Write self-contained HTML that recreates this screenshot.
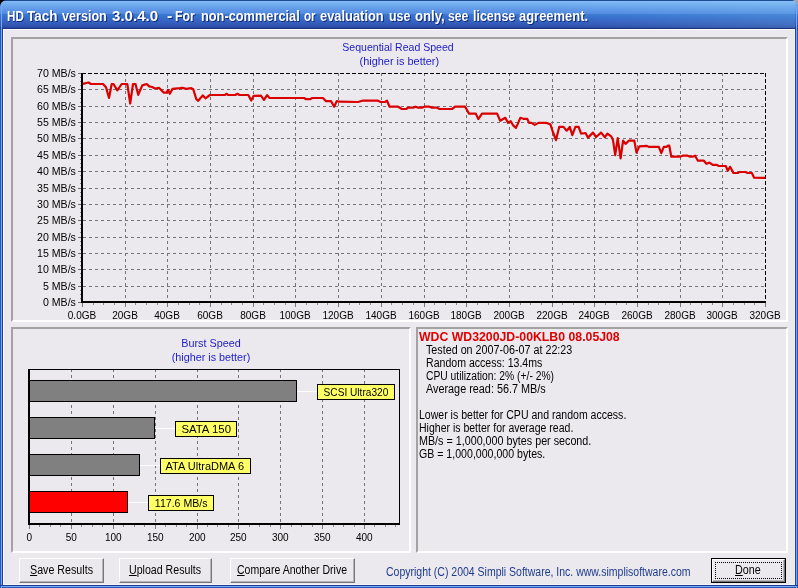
<!DOCTYPE html>
<html><head><meta charset="utf-8"><title>HD Tach</title>
<style>
html,body{margin:0;padding:0;}
body{width:798px;height:588px;overflow:hidden;position:relative;background:#ECE9EE;font-family:"Liberation Sans",sans-serif;}
.abs{position:absolute;}
#frame{left:0;top:0;width:798px;height:588px;background:#2a56c0;}
#client{left:3px;top:29px;width:792px;height:556px;background:#ECE9EE;box-shadow:inset 1px 1px 0 #fff, inset -1px -1px 0 #f6f4f8;}
#title{left:0;top:0;width:798px;height:29px;border-radius:7px 7px 0 0;
 background:linear-gradient(to bottom,#1c4c94 0px,#1c4c94 1px,#88bcfa 1px,#78b2f0 3px,#6ca6ec 6px,#5e96e6 10px,#528ae0 13.5px,#3a78d0 14.5px,#3670cc 17px,#3666c6 20px,#345ebc 23px,#3054b0 26px,#2a48a0 27.5px,#1c3480 28px,#1c3480 29px);}
#corner{left:0;top:0;width:798px;height:8px;background:#000;}
#ttext{left:8px;top:6px;color:#fff;font-weight:bold;font-size:14px;line-height:20px;white-space:pre;text-shadow:1px 1px 0 #0f2a78;}
.panel{box-sizing:border-box;border-style:solid;border-width:2px;border-color:#a2a2a2 #fff #fff #a2a2a2;background:#ECE9EE;}
.btn{box-sizing:border-box;height:25px;top:558px;border-style:solid;border-width:1px;border-color:#fff #777 #777 #fff;box-shadow:inset -1px -1px 0 #b6b4b8;background:#ECE9EE;}
.btn u{text-decoration:underline;}
.ax{font-family:"Liberation Sans",sans-serif;font-size:10.6px;fill:#000;}
.ttl{font-family:"Liberation Sans",sans-serif;font-size:10.8px;fill:#1c1cc4;}
.sx{display:inline-block;transform-origin:0 0;white-space:pre;}
.btxt{top:564px;font-size:12.5px;line-height:13px;color:#000;white-space:pre;}
#info{left:419px;top:331px;font-size:12.5px;line-height:13px;color:#000;white-space:pre;}
#info div{height:13px;}
#info .h{color:#e00000;font-weight:bold;}
#info .i{padding-left:7px;}
#copy{left:386px;top:566px;font-size:12.5px;line-height:13px;color:#1c3c8c;white-space:pre;}
#root{left:0;top:0;width:798px;height:588px;overflow:hidden;will-change:transform;}
</style></head><body><div id="root" class="abs">
<div id="corner" class="abs"></div><div class="abs" style="left:780px;top:0;width:18px;height:8px;background:#a4a4ac;"></div>
<div id="frame" class="abs" style="border-radius:8px 8px 0 0;"></div>
<div id="title" class="abs"></div><div class="abs" style="left:560px;top:1px;width:235px;height:27px;background:linear-gradient(to right,rgba(140,205,255,0),rgba(140,215,245,0.18));"></div>
<div id="ttext" class="abs"><span class="abs sx" style="left:-1.0px;top:0;transform:scaleX(0.8308)">HD</span> <span class="abs sx" style="left:19.1px;top:0;transform:scaleX(0.9640)">Tach</span> <span class="abs sx" style="left:54.2px;top:0;transform:scaleX(0.8996)">version</span> <span class="abs sx" style="left:104.3px;top:0;transform:scaleX(1.0768)">3.0.4.0</span> <span class="abs sx" style="left:158.9px;top:0;transform:scaleX(1.1367)">-</span> <span class="abs sx" style="left:166.9px;top:0;transform:scaleX(0.8780)">For</span> <span class="abs sx" style="left:192.8px;top:0;transform:scaleX(0.9127)">non-commercial</span> <span class="abs sx" style="left:295.5px;top:0;transform:scaleX(0.8286)">or</span> <span class="abs sx" style="left:311.8px;top:0;transform:scaleX(0.9199)">evaluation</span> <span class="abs sx" style="left:380.6px;top:0;transform:scaleX(0.8871)">use</span> <span class="abs sx" style="left:406.8px;top:0;transform:scaleX(0.9390)">only,</span> <span class="abs sx" style="left:440.4px;top:0;transform:scaleX(0.8690)">see</span> <span class="abs sx" style="left:464.7px;top:0;transform:scaleX(0.8910)">license</span> <span class="abs sx" style="left:510.7px;top:0;transform:scaleX(0.9251)">agreement.</span></div>
<div class="abs" style="left:1px;top:6px;width:1px;height:582px;background:#78a6f6;"></div>
<div class="abs" style="left:2px;top:28px;width:1px;height:560px;background:#1c3f90;"></div>
<div class="abs" style="left:796px;top:6px;width:1px;height:582px;background:#78a6f6;"></div>
<div class="abs" style="left:795px;top:28px;width:1px;height:560px;background:#1c3f90;"></div>
<div class="abs" style="left:0px;top:585px;width:798px;height:1px;background:#1c3f90;"></div>
<div class="abs" style="left:1px;top:586px;width:796px;height:1px;background:#78a6f6;"></div>
<div id="client" class="abs"></div>
<div class="abs panel" style="left:11px;top:37px;width:777px;height:285px;"></div>
<div class="abs panel" style="left:11px;top:327px;width:400px;height:226px;"></div>
<div class="abs panel" style="left:416px;top:327px;width:372px;height:226px;"></div>
<svg class="abs" style="left:0;top:0" width="798" height="588" viewBox="0 0 798 588" shape-rendering="crispEdges">
<line x1="83.0" y1="89.5" x2="765.0" y2="89.5" stroke="#747474" stroke-width="1" stroke-dasharray="3 3"/>
<line x1="83.0" y1="106.5" x2="765.0" y2="106.5" stroke="#747474" stroke-width="1" stroke-dasharray="3 3"/>
<line x1="83.0" y1="122.5" x2="765.0" y2="122.5" stroke="#747474" stroke-width="1" stroke-dasharray="3 3"/>
<line x1="83.0" y1="138.5" x2="765.0" y2="138.5" stroke="#747474" stroke-width="1" stroke-dasharray="3 3"/>
<line x1="83.0" y1="155.5" x2="765.0" y2="155.5" stroke="#747474" stroke-width="1" stroke-dasharray="3 3"/>
<line x1="83.0" y1="171.5" x2="765.0" y2="171.5" stroke="#747474" stroke-width="1" stroke-dasharray="3 3"/>
<line x1="83.0" y1="188.5" x2="765.0" y2="188.5" stroke="#747474" stroke-width="1" stroke-dasharray="3 3"/>
<line x1="83.0" y1="204.5" x2="765.0" y2="204.5" stroke="#747474" stroke-width="1" stroke-dasharray="3 3"/>
<line x1="83.0" y1="220.5" x2="765.0" y2="220.5" stroke="#747474" stroke-width="1" stroke-dasharray="3 3"/>
<line x1="83.0" y1="237.5" x2="765.0" y2="237.5" stroke="#747474" stroke-width="1" stroke-dasharray="3 3"/>
<line x1="83.0" y1="253.5" x2="765.0" y2="253.5" stroke="#747474" stroke-width="1" stroke-dasharray="3 3"/>
<line x1="83.0" y1="269.5" x2="765.0" y2="269.5" stroke="#747474" stroke-width="1" stroke-dasharray="3 3"/>
<line x1="83.0" y1="286.5" x2="765.0" y2="286.5" stroke="#747474" stroke-width="1" stroke-dasharray="3 3"/>
<line x1="125.5" y1="73.0" x2="125.5" y2="302.0" stroke="#747474" stroke-width="1" stroke-dasharray="3 3"/>
<line x1="167.5" y1="73.0" x2="167.5" y2="302.0" stroke="#747474" stroke-width="1" stroke-dasharray="3 3"/>
<line x1="210.5" y1="73.0" x2="210.5" y2="302.0" stroke="#747474" stroke-width="1" stroke-dasharray="3 3"/>
<line x1="253.5" y1="73.0" x2="253.5" y2="302.0" stroke="#747474" stroke-width="1" stroke-dasharray="3 3"/>
<line x1="295.5" y1="73.0" x2="295.5" y2="302.0" stroke="#747474" stroke-width="1" stroke-dasharray="3 3"/>
<line x1="338.5" y1="73.0" x2="338.5" y2="302.0" stroke="#747474" stroke-width="1" stroke-dasharray="3 3"/>
<line x1="381.5" y1="73.0" x2="381.5" y2="302.0" stroke="#747474" stroke-width="1" stroke-dasharray="3 3"/>
<line x1="424.5" y1="73.0" x2="424.5" y2="302.0" stroke="#747474" stroke-width="1" stroke-dasharray="3 3"/>
<line x1="466.5" y1="73.0" x2="466.5" y2="302.0" stroke="#747474" stroke-width="1" stroke-dasharray="3 3"/>
<line x1="509.5" y1="73.0" x2="509.5" y2="302.0" stroke="#747474" stroke-width="1" stroke-dasharray="3 3"/>
<line x1="552.5" y1="73.0" x2="552.5" y2="302.0" stroke="#747474" stroke-width="1" stroke-dasharray="3 3"/>
<line x1="594.5" y1="73.0" x2="594.5" y2="302.0" stroke="#747474" stroke-width="1" stroke-dasharray="3 3"/>
<line x1="637.5" y1="73.0" x2="637.5" y2="302.0" stroke="#747474" stroke-width="1" stroke-dasharray="3 3"/>
<line x1="680.5" y1="73.0" x2="680.5" y2="302.0" stroke="#747474" stroke-width="1" stroke-dasharray="3 3"/>
<line x1="722.5" y1="73.0" x2="722.5" y2="302.0" stroke="#747474" stroke-width="1" stroke-dasharray="3 3"/>
<line x1="82.0" y1="73.5" x2="766.0" y2="73.5" stroke="#000" stroke-width="1" stroke-dasharray="4 2"/>
<line x1="765.5" y1="73.0" x2="765.5" y2="302.0" stroke="#000" stroke-width="1" stroke-dasharray="4 2"/>
<rect x="81" y="73.0" width="2" height="230.0" fill="#000"/>
<rect x="81" y="301" width="685.0" height="2" fill="#000"/>
<rect x="78" y="73" width="3" height="1" fill="#6a6a6a"/>
<rect x="80" y="77" width="1" height="1" fill="#8a8a8a"/>
<rect x="80" y="81" width="1" height="1" fill="#8a8a8a"/>
<rect x="80" y="85" width="1" height="1" fill="#8a8a8a"/>
<text x="75.9" y="77" text-anchor="end" class="ax">70 MB/s</text>
<rect x="78" y="89" width="3" height="1" fill="#6a6a6a"/>
<rect x="80" y="93" width="1" height="1" fill="#8a8a8a"/>
<rect x="80" y="98" width="1" height="1" fill="#8a8a8a"/>
<rect x="80" y="102" width="1" height="1" fill="#8a8a8a"/>
<text x="75.9" y="93" text-anchor="end" class="ax">65 MB/s</text>
<rect x="78" y="106" width="3" height="1" fill="#6a6a6a"/>
<rect x="80" y="110" width="1" height="1" fill="#8a8a8a"/>
<rect x="80" y="114" width="1" height="1" fill="#8a8a8a"/>
<rect x="80" y="118" width="1" height="1" fill="#8a8a8a"/>
<text x="75.9" y="110" text-anchor="end" class="ax">60 MB/s</text>
<rect x="78" y="122" width="3" height="1" fill="#6a6a6a"/>
<rect x="80" y="126" width="1" height="1" fill="#8a8a8a"/>
<rect x="80" y="130" width="1" height="1" fill="#8a8a8a"/>
<rect x="80" y="134" width="1" height="1" fill="#8a8a8a"/>
<text x="75.9" y="126" text-anchor="end" class="ax">55 MB/s</text>
<rect x="78" y="138" width="3" height="1" fill="#6a6a6a"/>
<rect x="80" y="143" width="1" height="1" fill="#8a8a8a"/>
<rect x="80" y="147" width="1" height="1" fill="#8a8a8a"/>
<rect x="80" y="151" width="1" height="1" fill="#8a8a8a"/>
<text x="75.9" y="142" text-anchor="end" class="ax">50 MB/s</text>
<rect x="78" y="155" width="3" height="1" fill="#6a6a6a"/>
<rect x="80" y="159" width="1" height="1" fill="#8a8a8a"/>
<rect x="80" y="163" width="1" height="1" fill="#8a8a8a"/>
<rect x="80" y="167" width="1" height="1" fill="#8a8a8a"/>
<text x="75.9" y="159" text-anchor="end" class="ax">45 MB/s</text>
<rect x="78" y="171" width="3" height="1" fill="#6a6a6a"/>
<rect x="80" y="175" width="1" height="1" fill="#8a8a8a"/>
<rect x="80" y="179" width="1" height="1" fill="#8a8a8a"/>
<rect x="80" y="183" width="1" height="1" fill="#8a8a8a"/>
<text x="75.9" y="175" text-anchor="end" class="ax">40 MB/s</text>
<rect x="78" y="188" width="3" height="1" fill="#6a6a6a"/>
<rect x="80" y="192" width="1" height="1" fill="#8a8a8a"/>
<rect x="80" y="196" width="1" height="1" fill="#8a8a8a"/>
<rect x="80" y="200" width="1" height="1" fill="#8a8a8a"/>
<text x="75.9" y="192" text-anchor="end" class="ax">35 MB/s</text>
<rect x="78" y="204" width="3" height="1" fill="#6a6a6a"/>
<rect x="80" y="208" width="1" height="1" fill="#8a8a8a"/>
<rect x="80" y="212" width="1" height="1" fill="#8a8a8a"/>
<rect x="80" y="216" width="1" height="1" fill="#8a8a8a"/>
<text x="75.9" y="208" text-anchor="end" class="ax">30 MB/s</text>
<rect x="78" y="220" width="3" height="1" fill="#6a6a6a"/>
<rect x="80" y="224" width="1" height="1" fill="#8a8a8a"/>
<rect x="80" y="228" width="1" height="1" fill="#8a8a8a"/>
<rect x="80" y="232" width="1" height="1" fill="#8a8a8a"/>
<text x="75.9" y="224" text-anchor="end" class="ax">25 MB/s</text>
<rect x="78" y="237" width="3" height="1" fill="#6a6a6a"/>
<rect x="80" y="241" width="1" height="1" fill="#8a8a8a"/>
<rect x="80" y="245" width="1" height="1" fill="#8a8a8a"/>
<rect x="80" y="249" width="1" height="1" fill="#8a8a8a"/>
<text x="75.9" y="241" text-anchor="end" class="ax">20 MB/s</text>
<rect x="78" y="253" width="3" height="1" fill="#6a6a6a"/>
<rect x="80" y="257" width="1" height="1" fill="#8a8a8a"/>
<rect x="80" y="261" width="1" height="1" fill="#8a8a8a"/>
<rect x="80" y="265" width="1" height="1" fill="#8a8a8a"/>
<text x="75.9" y="257" text-anchor="end" class="ax">15 MB/s</text>
<rect x="78" y="269" width="3" height="1" fill="#6a6a6a"/>
<rect x="80" y="273" width="1" height="1" fill="#8a8a8a"/>
<rect x="80" y="277" width="1" height="1" fill="#8a8a8a"/>
<rect x="80" y="282" width="1" height="1" fill="#8a8a8a"/>
<text x="75.9" y="273" text-anchor="end" class="ax">10 MB/s</text>
<rect x="78" y="286" width="3" height="1" fill="#6a6a6a"/>
<rect x="80" y="290" width="1" height="1" fill="#8a8a8a"/>
<rect x="80" y="294" width="1" height="1" fill="#8a8a8a"/>
<rect x="80" y="298" width="1" height="1" fill="#8a8a8a"/>
<text x="75.9" y="290" text-anchor="end" class="ax">5 MB/s</text>
<rect x="78" y="302" width="3" height="1" fill="#6a6a6a"/>
<text x="75.9" y="306" text-anchor="end" class="ax">0 MB/s</text>
<rect x="82" y="303" width="1" height="4" fill="#7a7a7a"/>
<rect x="93" y="303" width="1" height="2" fill="#8a8a8a"/>
<rect x="103" y="303" width="1" height="2" fill="#8a8a8a"/>
<rect x="114" y="303" width="1" height="2" fill="#8a8a8a"/>
<text transform="translate(82,319) scale(0.948,1)" text-anchor="middle" class="ax">0.0GB</text>
<rect x="125" y="303" width="1" height="4" fill="#7a7a7a"/>
<rect x="135" y="303" width="1" height="2" fill="#8a8a8a"/>
<rect x="146" y="303" width="1" height="2" fill="#8a8a8a"/>
<rect x="157" y="303" width="1" height="2" fill="#8a8a8a"/>
<text transform="translate(125,319) scale(0.948,1)" text-anchor="middle" class="ax">20GB</text>
<rect x="167" y="303" width="1" height="4" fill="#7a7a7a"/>
<rect x="178" y="303" width="1" height="2" fill="#8a8a8a"/>
<rect x="189" y="303" width="1" height="2" fill="#8a8a8a"/>
<rect x="199" y="303" width="1" height="2" fill="#8a8a8a"/>
<text transform="translate(167,319) scale(0.948,1)" text-anchor="middle" class="ax">40GB</text>
<rect x="210" y="303" width="1" height="4" fill="#7a7a7a"/>
<rect x="221" y="303" width="1" height="2" fill="#8a8a8a"/>
<rect x="231" y="303" width="1" height="2" fill="#8a8a8a"/>
<rect x="242" y="303" width="1" height="2" fill="#8a8a8a"/>
<text transform="translate(210,319) scale(0.948,1)" text-anchor="middle" class="ax">60GB</text>
<rect x="253" y="303" width="1" height="4" fill="#7a7a7a"/>
<rect x="263" y="303" width="1" height="2" fill="#8a8a8a"/>
<rect x="274" y="303" width="1" height="2" fill="#8a8a8a"/>
<rect x="285" y="303" width="1" height="2" fill="#8a8a8a"/>
<text transform="translate(253,319) scale(0.948,1)" text-anchor="middle" class="ax">80GB</text>
<rect x="295" y="303" width="1" height="4" fill="#7a7a7a"/>
<rect x="306" y="303" width="1" height="2" fill="#8a8a8a"/>
<rect x="317" y="303" width="1" height="2" fill="#8a8a8a"/>
<rect x="327" y="303" width="1" height="2" fill="#8a8a8a"/>
<text transform="translate(295,319) scale(0.948,1)" text-anchor="middle" class="ax">100GB</text>
<rect x="338" y="303" width="1" height="4" fill="#7a7a7a"/>
<rect x="349" y="303" width="1" height="2" fill="#8a8a8a"/>
<rect x="359" y="303" width="1" height="2" fill="#8a8a8a"/>
<rect x="370" y="303" width="1" height="2" fill="#8a8a8a"/>
<text transform="translate(338,319) scale(0.948,1)" text-anchor="middle" class="ax">120GB</text>
<rect x="381" y="303" width="1" height="4" fill="#7a7a7a"/>
<rect x="391" y="303" width="1" height="2" fill="#8a8a8a"/>
<rect x="402" y="303" width="1" height="2" fill="#8a8a8a"/>
<rect x="413" y="303" width="1" height="2" fill="#8a8a8a"/>
<text transform="translate(381,319) scale(0.948,1)" text-anchor="middle" class="ax">140GB</text>
<rect x="424" y="303" width="1" height="4" fill="#7a7a7a"/>
<rect x="434" y="303" width="1" height="2" fill="#8a8a8a"/>
<rect x="445" y="303" width="1" height="2" fill="#8a8a8a"/>
<rect x="456" y="303" width="1" height="2" fill="#8a8a8a"/>
<text transform="translate(424,319) scale(0.948,1)" text-anchor="middle" class="ax">160GB</text>
<rect x="466" y="303" width="1" height="4" fill="#7a7a7a"/>
<rect x="477" y="303" width="1" height="2" fill="#8a8a8a"/>
<rect x="488" y="303" width="1" height="2" fill="#8a8a8a"/>
<rect x="498" y="303" width="1" height="2" fill="#8a8a8a"/>
<text transform="translate(466,319) scale(0.948,1)" text-anchor="middle" class="ax">180GB</text>
<rect x="509" y="303" width="1" height="4" fill="#7a7a7a"/>
<rect x="520" y="303" width="1" height="2" fill="#8a8a8a"/>
<rect x="530" y="303" width="1" height="2" fill="#8a8a8a"/>
<rect x="541" y="303" width="1" height="2" fill="#8a8a8a"/>
<text transform="translate(509,319) scale(0.948,1)" text-anchor="middle" class="ax">200GB</text>
<rect x="552" y="303" width="1" height="4" fill="#7a7a7a"/>
<rect x="562" y="303" width="1" height="2" fill="#8a8a8a"/>
<rect x="573" y="303" width="1" height="2" fill="#8a8a8a"/>
<rect x="584" y="303" width="1" height="2" fill="#8a8a8a"/>
<text transform="translate(552,319) scale(0.948,1)" text-anchor="middle" class="ax">220GB</text>
<rect x="594" y="303" width="1" height="4" fill="#7a7a7a"/>
<rect x="605" y="303" width="1" height="2" fill="#8a8a8a"/>
<rect x="616" y="303" width="1" height="2" fill="#8a8a8a"/>
<rect x="626" y="303" width="1" height="2" fill="#8a8a8a"/>
<text transform="translate(594,319) scale(0.948,1)" text-anchor="middle" class="ax">240GB</text>
<rect x="637" y="303" width="1" height="4" fill="#7a7a7a"/>
<rect x="648" y="303" width="1" height="2" fill="#8a8a8a"/>
<rect x="658" y="303" width="1" height="2" fill="#8a8a8a"/>
<rect x="669" y="303" width="1" height="2" fill="#8a8a8a"/>
<text transform="translate(637,319) scale(0.948,1)" text-anchor="middle" class="ax">260GB</text>
<rect x="680" y="303" width="1" height="4" fill="#7a7a7a"/>
<rect x="690" y="303" width="1" height="2" fill="#8a8a8a"/>
<rect x="701" y="303" width="1" height="2" fill="#8a8a8a"/>
<rect x="712" y="303" width="1" height="2" fill="#8a8a8a"/>
<text transform="translate(680,319) scale(0.948,1)" text-anchor="middle" class="ax">280GB</text>
<rect x="722" y="303" width="1" height="4" fill="#7a7a7a"/>
<rect x="733" y="303" width="1" height="2" fill="#8a8a8a"/>
<rect x="744" y="303" width="1" height="2" fill="#8a8a8a"/>
<rect x="754" y="303" width="1" height="2" fill="#8a8a8a"/>
<text transform="translate(722,319) scale(0.948,1)" text-anchor="middle" class="ax">300GB</text>
<rect x="765" y="303" width="1" height="4" fill="#7a7a7a"/>
<text transform="translate(765,319) scale(0.948,1)" text-anchor="middle" class="ax">320GB</text>
<polyline points="82.9,83.9 88.5,82.5 91.0,84.0 103.0,84.0 106.0,87.3 109.0,98.0 111.7,84.0 113.5,84.0 117.3,90.4 121.7,84.0 127.3,84.0 130.2,103.5 133.0,84.0 135.5,84.0 138.2,94.8 142.3,85.4 146.7,84.0 149.2,86.4 152.3,87.0 154.8,88.5 159.2,87.9 163.6,92.6 166.7,92.6 168.0,89.8 169.8,93.8 172.5,88.9 180.0,88.2 182.5,87.9 186.3,88.9 191.3,88.2 193.2,89.2 196.3,99.2 198.2,100.8 202.8,95.4 205.5,98.3 210.0,95.0 225.0,95.0 226.4,93.8 228.3,95.0 235.2,95.0 237.4,93.8 239.5,95.0 248.3,95.0 251.2,100.5 253.7,95.8 260.9,95.6 264.0,99.8 267.1,95.1 269.6,98.0 304.1,98.0 306.0,99.2 310.4,99.2 312.2,98.0 322.9,98.0 326.0,101.1 331.0,101.1 334.2,106.7 336.7,101.1 339.2,101.7 358.0,102.0 362.4,100.7 378.0,100.7 380.6,102.0 385.0,102.0 387.0,100.7 389.6,106.7 398.1,106.7 401.9,109.0 406.2,109.0 408.1,107.6 413.1,107.6 415.6,106.7 418.2,107.6 421.9,107.6 424.4,106.7 429.4,106.7 431.9,107.6 436.9,107.6 439.5,109.0 452.0,109.0 455.1,106.7 465.2,106.7 468.9,113.6 475.8,113.6 478.3,119.1 482.0,113.6 497.1,113.6 500.2,120.7 505.3,117.8 508.1,122.9 510.6,121.1 513.4,125.7 515.9,127.9 517.8,123.9 520.3,117.8 523.4,118.8 527.2,118.8 529.1,122.9 531.6,122.9 534.7,124.9 538.5,122.9 546.0,122.8 550.4,124.4 552.9,132.0 556.0,140.1 559.2,126.9 563.5,126.9 566.7,130.7 569.8,126.9 572.3,135.1 575.4,126.9 578.6,126.9 581.1,133.6 585.5,133.0 588.0,137.6 593.0,132.6 596.1,137.0 601.1,132.6 604.9,137.2 607.4,133.6 611.2,136.3 613.0,140.1 615.2,155.1 617.7,138.2 620.6,158.3 623.1,140.7 625.6,143.9 628.7,140.7 634.3,140.7 636.5,152.6 639.4,146.4 646.9,145.9 648.8,146.9 658.8,146.9 661.3,153.2 663.8,146.9 666.5,146.9 668.0,145.7 669.3,145.7 671.3,156.7 680.1,156.7 682.6,155.7 687.6,155.7 690.1,156.7 692.6,156.7 695.1,155.7 697.9,160.7 703.9,160.7 706.4,163.8 709.5,162.6 712.7,164.8 716.4,164.8 718.9,166.0 725.8,166.0 727.8,170.7 730.1,166.8 733.5,173.0 738.1,173.0 739.4,172.0 745.6,172.0 747.5,173.0 751.9,173.0 754.1,177.7 765.5,177.9" fill="none" stroke="#da0000" stroke-width="2.2" stroke-linejoin="round" stroke-linecap="butt" shape-rendering="geometricPrecision"/>
<text x="342.3" y="51" textLength="111.4" lengthAdjust="spacingAndGlyphs" class="ttl">Sequential Read Speed</text>
<text x="359.5" y="65" textLength="79.6" lengthAdjust="spacingAndGlyphs" class="ttl">(higher is better)</text>
<line x1="71.5" y1="369" x2="71.5" y2="523" stroke="#747474" stroke-width="1" stroke-dasharray="3 3"/>
<line x1="113.5" y1="369" x2="113.5" y2="523" stroke="#747474" stroke-width="1" stroke-dasharray="3 3"/>
<line x1="155.5" y1="369" x2="155.5" y2="523" stroke="#747474" stroke-width="1" stroke-dasharray="3 3"/>
<line x1="197.5" y1="369" x2="197.5" y2="523" stroke="#747474" stroke-width="1" stroke-dasharray="3 3"/>
<line x1="238.5" y1="369" x2="238.5" y2="523" stroke="#747474" stroke-width="1" stroke-dasharray="3 3"/>
<line x1="280.5" y1="369" x2="280.5" y2="523" stroke="#747474" stroke-width="1" stroke-dasharray="3 3"/>
<line x1="322.5" y1="369" x2="322.5" y2="523" stroke="#747474" stroke-width="1" stroke-dasharray="3 3"/>
<line x1="364.5" y1="369" x2="364.5" y2="523" stroke="#747474" stroke-width="1" stroke-dasharray="3 3"/>
<rect x="28" y="369" width="2" height="156" fill="#000"/>
<rect x="28" y="523" width="372" height="2" fill="#000"/>
<rect x="28" y="369" width="372" height="1" fill="#000"/>
<rect x="399" y="369" width="1" height="156" fill="#000"/>
<rect x="29.5" y="380.5" width="267.0" height="21" fill="#808080" stroke="#000" stroke-width="1"/>
<rect x="297.0" y="391" width="20.0" height="1" fill="#fff"/>
<rect x="317.5" y="384.5" width="77" height="15" fill="#ffff66" stroke="#000" stroke-width="1"/>
<text x="323.6" y="395.8" textLength="64.7" lengthAdjust="spacingAndGlyphs" class="ax" style="font-size:11.2px">SCSI Ultra320</text>
<rect x="29.5" y="417.5" width="125.0" height="21" fill="#808080" stroke="#000" stroke-width="1"/>
<rect x="155.0" y="428" width="20.0" height="1" fill="#fff"/>
<rect x="175.5" y="421.5" width="61" height="15" fill="#ffff66" stroke="#000" stroke-width="1"/>
<text x="181.4" y="432.8" textLength="49.6" lengthAdjust="spacingAndGlyphs" class="ax" style="font-size:11.2px">SATA 150</text>
<rect x="29.5" y="454.5" width="110.0" height="21" fill="#808080" stroke="#000" stroke-width="1"/>
<rect x="140.0" y="465" width="20.0" height="1" fill="#fff"/>
<rect x="160.5" y="458.5" width="90" height="15" fill="#ffff66" stroke="#000" stroke-width="1"/>
<text x="165.6" y="469.8" textLength="78.4" lengthAdjust="spacingAndGlyphs" class="ax" style="font-size:11.2px">ATA UltraDMA 6</text>
<rect x="29.5" y="491.5" width="98.0" height="21" fill="#ff0000" stroke="#000" stroke-width="1"/>
<rect x="128.0" y="502" width="20.0" height="1" fill="#fff"/>
<rect x="148.5" y="495.5" width="65" height="15" fill="#ffff66" stroke="#000" stroke-width="1"/>
<text x="154.8" y="506.8" textLength="52.7" lengthAdjust="spacingAndGlyphs" class="ax" style="font-size:11.2px">117.6 MB/s</text>
<rect x="29" y="525" width="1" height="4" fill="#7a7a7a"/>
<rect x="39" y="525" width="1" height="2" fill="#8a8a8a"/>
<rect x="50" y="525" width="1" height="2" fill="#8a8a8a"/>
<rect x="60" y="525" width="1" height="2" fill="#8a8a8a"/>
<text transform="translate(29.3,541) scale(0.945,1)" text-anchor="middle" class="ax">0</text>
<rect x="71" y="525" width="1" height="4" fill="#7a7a7a"/>
<rect x="81" y="525" width="1" height="2" fill="#8a8a8a"/>
<rect x="92" y="525" width="1" height="2" fill="#8a8a8a"/>
<rect x="102" y="525" width="1" height="2" fill="#8a8a8a"/>
<text transform="translate(71.3,541) scale(0.945,1)" text-anchor="middle" class="ax">50</text>
<rect x="113" y="525" width="1" height="4" fill="#7a7a7a"/>
<rect x="123" y="525" width="1" height="2" fill="#8a8a8a"/>
<rect x="134" y="525" width="1" height="2" fill="#8a8a8a"/>
<rect x="144" y="525" width="1" height="2" fill="#8a8a8a"/>
<text transform="translate(113.3,541) scale(0.945,1)" text-anchor="middle" class="ax">100</text>
<rect x="155" y="525" width="1" height="4" fill="#7a7a7a"/>
<rect x="165" y="525" width="1" height="2" fill="#8a8a8a"/>
<rect x="176" y="525" width="1" height="2" fill="#8a8a8a"/>
<rect x="186" y="525" width="1" height="2" fill="#8a8a8a"/>
<text transform="translate(155.3,541) scale(0.945,1)" text-anchor="middle" class="ax">150</text>
<rect x="197" y="525" width="1" height="4" fill="#7a7a7a"/>
<rect x="207" y="525" width="1" height="2" fill="#8a8a8a"/>
<rect x="217" y="525" width="1" height="2" fill="#8a8a8a"/>
<rect x="228" y="525" width="1" height="2" fill="#8a8a8a"/>
<text transform="translate(197.3,541) scale(0.945,1)" text-anchor="middle" class="ax">200</text>
<rect x="238" y="525" width="1" height="4" fill="#7a7a7a"/>
<rect x="249" y="525" width="1" height="2" fill="#8a8a8a"/>
<rect x="259" y="525" width="1" height="2" fill="#8a8a8a"/>
<rect x="270" y="525" width="1" height="2" fill="#8a8a8a"/>
<text transform="translate(238.3,541) scale(0.945,1)" text-anchor="middle" class="ax">250</text>
<rect x="280" y="525" width="1" height="4" fill="#7a7a7a"/>
<rect x="291" y="525" width="1" height="2" fill="#8a8a8a"/>
<rect x="301" y="525" width="1" height="2" fill="#8a8a8a"/>
<rect x="312" y="525" width="1" height="2" fill="#8a8a8a"/>
<text transform="translate(280.3,541) scale(0.945,1)" text-anchor="middle" class="ax">300</text>
<rect x="322" y="525" width="1" height="4" fill="#7a7a7a"/>
<rect x="333" y="525" width="1" height="2" fill="#8a8a8a"/>
<rect x="343" y="525" width="1" height="2" fill="#8a8a8a"/>
<rect x="354" y="525" width="1" height="2" fill="#8a8a8a"/>
<text transform="translate(322.3,541) scale(0.945,1)" text-anchor="middle" class="ax">350</text>
<rect x="364" y="525" width="1" height="4" fill="#7a7a7a"/>
<rect x="374" y="525" width="1" height="2" fill="#8a8a8a"/>
<rect x="385" y="525" width="1" height="2" fill="#8a8a8a"/>
<rect x="395" y="525" width="1" height="2" fill="#8a8a8a"/>
<text transform="translate(364.3,541) scale(0.945,1)" text-anchor="middle" class="ax">400</text>
<text x="211" y="347" text-anchor="middle" class="ttl">Burst Speed</text>
<text x="211" y="361" text-anchor="middle" class="ttl">(higher is better)</text>
</svg>
<div id="info" class="abs"><div class="h"><span class="sx" style="transform:scaleX(0.9826)">WDC WD3200JD-00KLB0 08.05J08</span></div><div class="i"><span class="sx" style="transform:scaleX(0.8592)">Tested on 2007-06-07 at 22:23</span></div><div class="i"><span class="sx" style="transform:scaleX(0.8454)">Random access: 13.4ms</span></div><div class="i"><span class="sx" style="transform:scaleX(0.8244)">CPU utilization: 2% (+/- 2%)</span></div><div class="i"><span class="sx" style="transform:scaleX(0.8671)">Average read: 56.7 MB/s</span></div><div> </div><div><span class="sx" style="transform:scaleX(0.8429)">Lower is better for CPU and random access.</span></div><div><span class="sx" style="transform:scaleX(0.8412)">Higher is better for average read.</span></div><div><span class="sx" style="transform:scaleX(0.8595)">MB/s = 1,000,000 bytes per second.</span></div><div><span class="sx" style="transform:scaleX(0.8473)">GB = 1,000,000,000 bytes.</span></div></div>
<div class="abs btn" style="left:19px;width:85px;"></div>
<div class="abs btxt" style="left:30px;"><span class="sx" style="transform:scaleX(0.8554)"><u>S</u>ave Results</span></div>
<div class="abs btn" style="left:119px;width:93px;"></div>
<div class="abs btxt" style="left:129px;"><span class="sx" style="transform:scaleX(0.8494)"><u>U</u>pload Results</span></div>
<div class="abs btn" style="left:230px;width:125px;"></div>
<div class="abs btxt" style="left:237px;"><span class="sx" style="transform:scaleX(0.8421)"><u>C</u>ompare Another Drive</span></div>
<div id="copy" class="abs"><span class="sx" style="transform:scaleX(0.8397)">Copyright (C) 2004 Simpli Software, Inc. www.simplisoftware.com</span></div>
<div class="abs" style="left:711px;top:558px;width:75px;height:25px;box-sizing:border-box;border:1px solid #000;background:#ECE9EE;">
 <div class="abs" style="left:0;top:0;width:73px;height:23px;box-sizing:border-box;border-style:solid;border-width:1px;border-color:#fff #777 #777 #fff;box-shadow:inset -1px -1px 0 #b6b4b8;"></div>
 <div class="abs" style="left:3px;top:3px;width:67px;height:17px;box-sizing:border-box;border:1px dotted #000;"></div>
</div>
<div class="abs btxt" style="left:735px;"><span class="sx" style="transform:scaleX(0.8600)"><u>D</u>one</span></div>
</div></body></html>
